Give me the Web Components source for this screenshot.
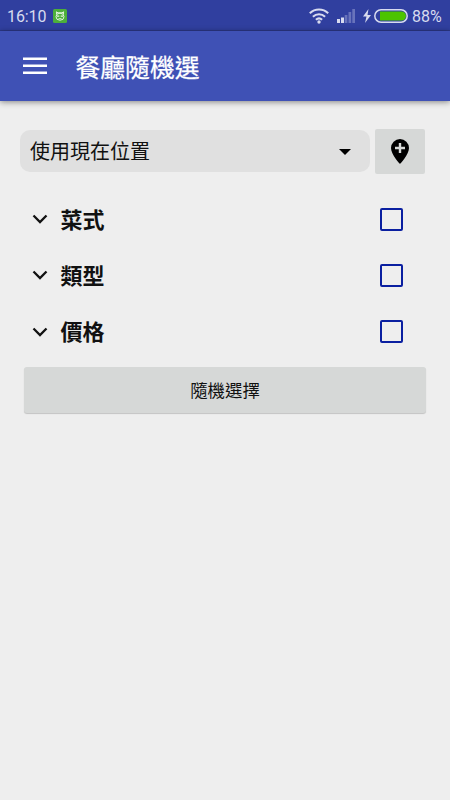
<!DOCTYPE html>
<html lang="zh-Hant">
<head>
<meta charset="utf-8">
<title>餐廳隨機選</title>
<style>
    body {
        margin: 0;
        width: 450px;
        height: 800px;
        overflow: hidden;
        background: #eeeeee;
        font-family: Roboto, "Noto Sans CJK TC", sans-serif;
        color: #111;
    }
</style>
</head>
<body>
<restaurant-app></restaurant-app>

<script>
class StatusBar extends HTMLElement {
    constructor() {
        super();

        this.attachShadow({ mode: 'open' });
        this.shadowRoot.innerHTML = `
            <style>
                :host {
                    display: flex;
                    align-items: center;
                    box-sizing: border-box;
                    height: 31px;
                    padding: 1px 8px 0 7px;
                    background: #303f9f;
                    border-bottom: 1px solid #2c3888;
                    color: #d8dbef;
                    font-size: 16px;
                    line-height: 30px;
                }
                svg {
                    display: block;
                    flex: none;
                }
                .time {
                    width: 46px;
                    padding-top: 2px;
                    letter-spacing: -.1px;
                }
                .spacer {
                    flex: 1;
                }
                .wifi { margin-right: 8px; }
                .signal { margin-right: 8px; }
                .bolt { margin-right: 3px; }
                .battery { margin-right: 4px; }
                .percent {
                    width: 30px;
                    padding-top: 2px;
                    white-space: nowrap;
                    letter-spacing: 0;
                }
            </style>
            <span class="time"><slot name="time"></slot></span>
            <svg width="14" height="14" viewBox="0 0 14 14">
                <rect width="14" height="14" rx="1.500" fill="#4caf3a"/>
                <path d="M3.600 5.200 3.400 2.800 5 3.800h4l1.600-1-.2 2.400" fill="none" stroke="#e3f4df"/>
                <ellipse cx="7" cy="7.700" rx="4" ry="3.500" fill="none" stroke="#e3f4df"/>
                <path d="M4 6.500h2.300v1.300H4zM7.700 6.500H10v1.300H7.700zM5.500 9h3v.7h-3z" fill="#e3f4df"/>
            </svg>
            <span class="spacer"></span>
            <svg class="wifi" width="20" height="16" viewBox="0 0 20 16" fill="none" stroke="#d8dbef" stroke-width="2.100">
                <path d="M.8 5.300C6 .3 14 .3 19.200 5.300M3.900 8.700c3.500-3.200 8.700-3.200 12.200 0M6.900 11.700c1.800-1.600 4.400-1.600 6.200 0"/>
                <circle cx="10" cy="14" r="1.700" fill="#d8dbef" stroke="none"/>
            </svg>
            <svg class="signal" width="18" height="14" viewBox="0 0 18 14">
                <path d="M0 10h3v4H0zM4 8.500h3V14H4z" fill="#d8dbef"/>
                <path d="M7.700 6h2.700v8H7.700zM11.500 3h2.700v11h-2.700zM15.300 0H18v14h-2.700z" fill="#6873bb"/>
            </svg>
            <svg class="bolt" width="8" height="14" viewBox="0 0 8 14" fill="#d8dbef">
                <path d="M5.500 0 0 7.500h3.500L2 14l6-8H4.500z"/>
            </svg>
            <svg class="battery" width="34" height="14" viewBox="0 0 34 14">
                <rect x=".8" y=".8" width="32.400" height="12.400" rx="6.200" fill="none" stroke="#d8dbef" stroke-width="1.500"/>
                <path d="M6 2.500h21.500a4.500 4.500 0 0 1 0 9H6z" fill="#4cc400"/>
            </svg>
            <span class="percent"><slot name="battery"></slot></span>`;
    }
}

class AppToolbar extends HTMLElement {
    constructor() {
        super();

        this.attachShadow({ mode: 'open' });
        this.shadowRoot.innerHTML = `
            <style>
                :host {
                    display: flex;
                    align-items: center;
                    height: 70px;
                    padding-left: 23px;
                    background: #3f51b5;
                    color: #fff;
                    box-shadow: 0 1px 6px rgba(0, 0, 0, .45);
                }
                svg {
                    display: block;
                    margin-right: 28.5px;
                }
                .title {
                    padding-top: 5px;
                    font-size: 24.8px;
                    line-height: 36px;
                    -webkit-text-stroke: .25px;
                }
            </style>
            <svg width="24" height="18" viewBox="0 0 24 18" fill="#fff">
                <path d="M0 .5h24v2.600H0zM0 7.500h24v2.600H0zM0 14.500h24v2.600H0z"/>
            </svg>
            <div class="title"><slot></slot></div>`;
    }
}

class LocationPicker extends HTMLElement {
    constructor() {
        super();

        this.attachShadow({ mode: 'open' });
        this.shadowRoot.innerHTML = `
            <style>
                :host {
                    display: flex;
                    align-items: flex-start;
                    gap: 5px;
                    height: 45px;
                }
                .select {
                    display: flex;
                    align-items: center;
                    justify-content: space-between;
                    box-sizing: border-box;
                    width: 350px;
                    height: 42px;
                    margin-top: 1px;
                    padding: 0 19px 0 10px;
                    border-radius: 10px;
                    background: #e0e0e0;
                    font-size: 20px;
                    line-height: 42px;
                }
                .value {
                    padding-top: 2px;
                }
                .arrow {
                    margin-top: 2px;
                }
                .pin {
                    display: flex;
                    align-items: center;
                    justify-content: center;
                    width: 50px;
                    height: 45px;
                    border-radius: 2px;
                    background: #d6d8d7;
                }
            </style>
            <div class="select">
                <span class="value"><slot></slot></span>
                <svg class="arrow" width="12" height="6" viewBox="0 0 12 6"><path d="M0 0h12L6 6z"/></svg>
            </div>
            <div class="pin" role="button">
                <svg width="18" height="25" viewBox="0 0 18 25">
                    <path fill-rule="evenodd" d="M9 0a9 9 0 0 0-9 9c0 6.500 9 16 9 16s9-9.500 9-16a9 9 0 0 0-9-9ZM7.800 4h2.400v3.800H14v2.400h-3.800V14H7.800v-3.800H4V7.800h3.800z"/>
                </svg>
            </div>`;
    }
}

class FilterRow extends HTMLElement {
    constructor() {
        super();

        this.attachShadow({ mode: 'open' });
        this.shadowRoot.innerHTML = `
            <style>
                :host {
                    display: flex;
                    align-items: center;
                    height: 56.3px;
                    padding: 0 22px 0 12px;
                }
                .label {
                    flex: 1;
                    margin-left: 12.5px;
                    padding-top: 3px;
                    font-size: 22px;
                    font-weight: 700;
                    line-height: 32px;
                }
                .box {
                    box-sizing: border-box;
                    width: 23px;
                    height: 23px;
                    border: 2px solid #0a1fa0;
                    border-radius: 2px;
                }
            </style>
            <svg width="16" height="10" viewBox="0 0 16 10" fill="none" stroke="#111" stroke-width="2.300">
                <path d="M1.500 1.500 8 8l6.500-6.500"/>
            </svg>
            <span class="label"><slot></slot></span>
            <span class="box" role="checkbox"></span>`;
    }
}

class RaisedButton extends HTMLElement {
    constructor() {
        super();

        this.attachShadow({ mode: 'open' });
        this.shadowRoot.innerHTML = `
            <style>
                :host {
                    display: block;
                    height: 46px;
                    border-radius: 3px;
                    background: #d6d8d7;
                    box-shadow: 0 1px 1px rgba(0, 0, 0, .18);
                    text-align: center;
                    font-size: 17.4px;
                    line-height: 48px;
                }
            </style>
            <slot></slot>`;
    }
}

class RestaurantApp extends HTMLElement {
    constructor() {
        super();

        this.attachShadow({ mode: 'open' });
        this.shadowRoot.innerHTML = `
            <style>
                :host {
                    display: block;
                }
                main {
                    padding: 28px 24px 0 20px;
                }
                .filters {
                    margin: 17px 1px 0 0;
                }
                raised-button {
                    margin: 7px 0 0 4px;
                }
            </style>
            <status-bar>
                <span slot="time">16:10</span>
                <span slot="battery">88%</span>
            </status-bar>
            <app-toolbar>餐廳隨機選</app-toolbar>
            <main>
                <location-picker>使用現在位置</location-picker>
                <div class="filters">
                    <filter-row>菜式</filter-row>
                    <filter-row>類型</filter-row>
                    <filter-row>價格</filter-row>
                </div>
                <raised-button>隨機選擇</raised-button>
            </main>`;
    }
}

window.customElements.define('status-bar', StatusBar);
window.customElements.define('app-toolbar', AppToolbar);
window.customElements.define('location-picker', LocationPicker);
window.customElements.define('filter-row', FilterRow);
window.customElements.define('raised-button', RaisedButton);
window.customElements.define('restaurant-app', RestaurantApp);
</script>
</body>
</html>
